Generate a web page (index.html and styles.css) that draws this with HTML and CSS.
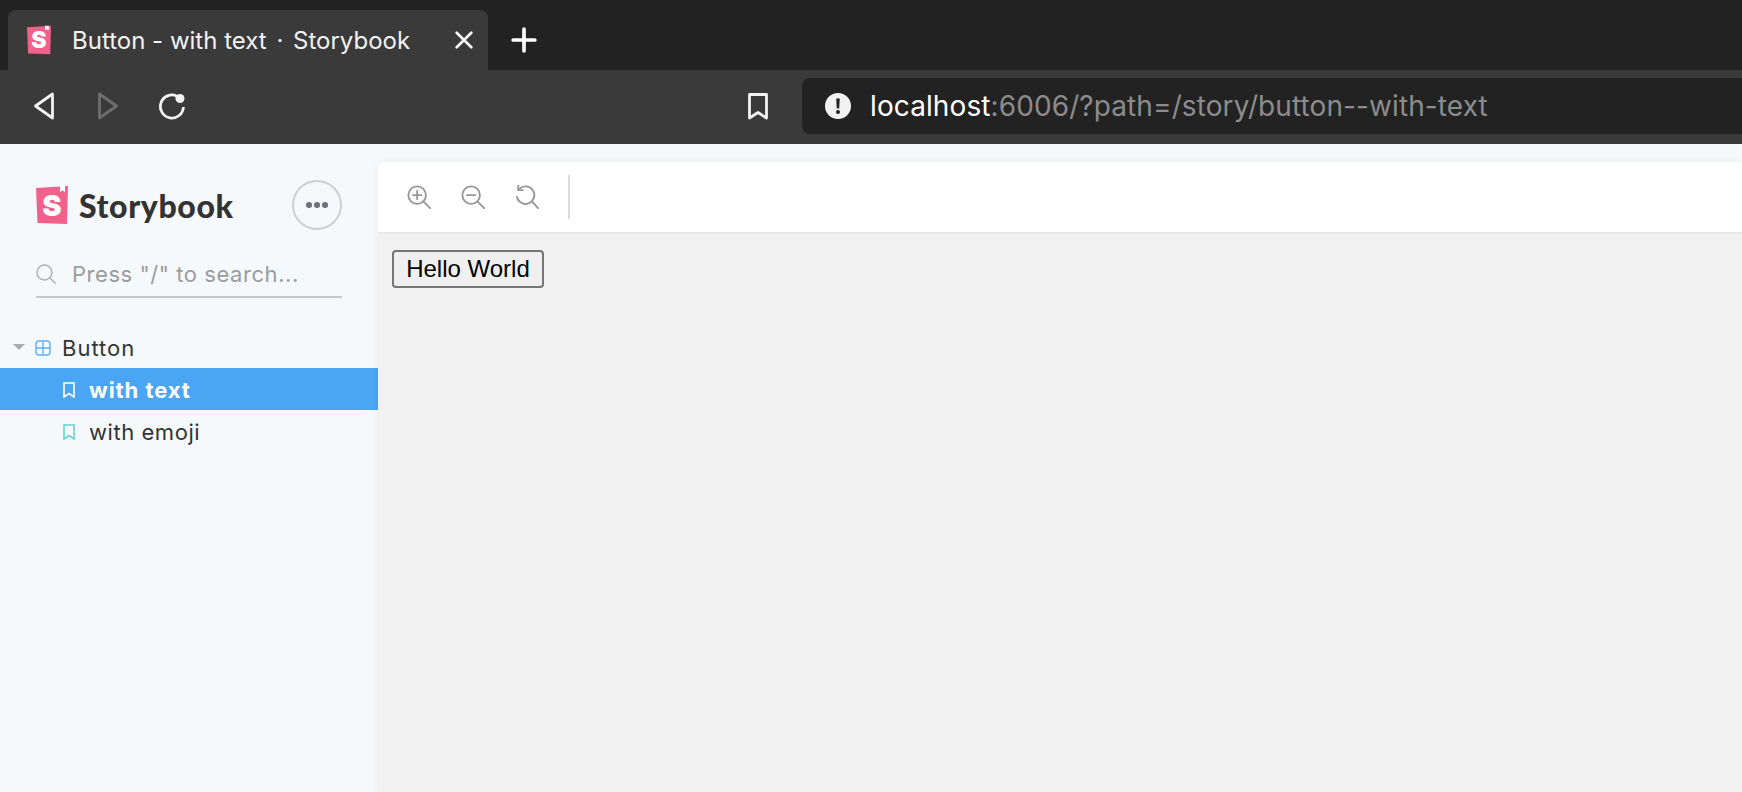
FILE: index.html
```html
<!DOCTYPE html>
<html lang="en">
<head>
<meta charset="utf-8">
<title>Button - with text · Storybook</title>
<link rel="stylesheet" href="styles.css">
</head>
<body>
<div class="tabstrip">
  <div class="tab">
    <span class="logo logo-small"><svg class="logo-bg" viewBox="0 0 32 38"><path d="M0 2 L32 0 L31 38 L1.5 37 Z" fill="#f1618c"/><path d="M24 0 L24 6 L26.5 4.5 L29 6 L29 0 Z" fill="#fff"/></svg><span class="logo-s">S</span></span>
    <span class="tab-title">Button - with text <span class="sep">·</span> Storybook</span>
    <svg class="tab-close" viewBox="0 0 16 16"><path d="M1.5 1.5 L14.5 14.5 M14.5 1.5 L1.5 14.5" stroke="#f2f2f2" stroke-width="2.4" stroke-linecap="round"/></svg>
  </div>
  <svg class="new-tab" viewBox="0 0 24 24"><path d="M12 2 V22 M2 12 H22" stroke="#fff" stroke-width="3.4" stroke-linecap="round"/></svg>
</div>
<div class="toolbar">
  <div class="nav">
    <svg class="nav-icon" viewBox="0 0 20 28"><path d="M18.5 2 V26 L1.5 14 Z" fill="none" stroke="#f2f2f2" stroke-width="2.8" stroke-linejoin="round"/></svg>
    <svg class="nav-icon" viewBox="0 0 20 28"><path d="M1.5 2 V26 L18.5 14 Z" fill="none" stroke="#6e6e6e" stroke-width="2.8" stroke-linejoin="round"/></svg>
    <svg class="nav-icon nav-reload" viewBox="0 0 28 28"><path d="M19 4.2 A11.5 11.5 0 1 0 25.4 15" fill="none" stroke="#f2f2f2" stroke-width="2.8"/><circle cx="22" cy="6.5" r="4.5" fill="#f2f2f2"/></svg>
  </div>
  <svg class="bookmark" viewBox="0 0 20 27"><path d="M1.5 1.5 H18.5 V25 L10 19.5 L1.5 25 Z" fill="none" stroke="#f2f2f2" stroke-width="2.8" stroke-linejoin="round"/></svg>
  <div class="address">
    <svg class="alert" viewBox="0 0 26 26"><circle cx="13" cy="13" r="13" fill="#f2f2f2"/><path d="M11.2 5.5 H14.8 L14.2 15.5 H11.8 Z" fill="#222"/><circle cx="13" cy="19" r="2" fill="#222"/></svg>
    <span class="url"><span class="host">localhost</span>:6006/?path=/story/button--with-text</span>
  </div>
</div>
<div class="app">
  <aside class="sidebar">
    <div class="brand">
      <span class="logo logo-large"><svg class="logo-bg" viewBox="0 0 32 38"><path d="M0 2 L32 0 L31 38 L1.5 37 Z" fill="#f1618c"/><path d="M24 0 L24 6 L26.5 4.5 L29 6 L29 0 Z" fill="#fff"/></svg><span class="logo-s">S</span></span>
      <span class="wordmark">Storybook</span>
      <span class="menu-btn"><i></i><i></i><i></i></span>
    </div>
    <div class="search">
      <svg class="search-icon" viewBox="0 0 20 20"><circle cx="8.5" cy="8.5" r="7.5" fill="none" stroke="#aeb1b4" stroke-width="1.5"/><path d="M14 14 L19.5 19.5" stroke="#aeb1b4" stroke-width="1.5" stroke-linecap="round"/></svg>
      <span class="search-text">Press "/" to search...</span>
    </div>
    <nav class="tree">
      <div class="row row-component">
        <span class="caret"></span>
        <svg class="component-icon" viewBox="0 0 16 16"><rect x="1" y="1" width="14" height="14" rx="3" fill="none" stroke="#5fb0f7" stroke-width="1.4"/><path d="M8 1 V15 M1 8 H15" stroke="#5fb0f7" stroke-width="1.4"/></svg>
        <span>Button</span>
      </div>
      <div class="row row-story row-active">
        <svg class="story-icon" viewBox="0 0 12 16"><path d="M1 1 H11 V15 L6 11.5 L1 15 Z" fill="none" stroke="#fff" stroke-width="1.6"/></svg>
        <span>with text</span>
      </div>
      <div class="row row-story">
        <svg class="story-icon" viewBox="0 0 12 16"><path d="M1 1 H11 V15 L6 11.5 L1 15 Z" fill="none" stroke="#63d4d0" stroke-width="1.6"/></svg>
        <span>with emoji</span>
      </div>
    </nav>
  </aside>
  <main class="preview">
    <div class="preview-bar">
      <svg class="zoom-icon" viewBox="0 0 26 26"><circle cx="11" cy="11" r="9.5" fill="none" stroke="#979797" stroke-width="2"/><path d="M18 18 L25 25 M11 6.5 V15.5 M6.5 11 H15.5" stroke="#979797" stroke-width="2" stroke-linecap="round"/></svg>
      <svg class="zoom-icon" viewBox="0 0 26 26"><circle cx="11" cy="11" r="9.5" fill="none" stroke="#979797" stroke-width="2"/><path d="M18 18 L25 25 M6.5 11 H15.5" stroke="#979797" stroke-width="2" stroke-linecap="round"/></svg>
      <svg class="zoom-icon" viewBox="0 0 26 26"><path d="M4.5 4.5 A9.5 9.5 0 1 1 2 12" fill="none" stroke="#979797" stroke-width="2"/><path d="M18.5 18 L25 25 M3.5 0.5 V5.5 H8.5" fill="none" stroke="#979797" stroke-width="2" stroke-linecap="round"/></svg>
      <span class="bar-divider"></span>
    </div>
    <div class="canvas">
      <button class="hello" type="button">Hello World</button>
    </div>
  </main>
</div>
</body>
</html>
```

FILE: styles.css
```css
* { box-sizing: border-box; }
html, body { margin: 0; height: 100%; overflow: hidden; }
body { width: 1742px; height: 792px; display: flex; flex-direction: column; font-family: Inter, "Liberation Sans", sans-serif; background: #f6f9fc; }

.tabstrip { height: 70px; flex: none; background: #222; padding: 10px 0 0 8px; display: flex; align-items: flex-start; }
.tab { width: 480px; height: 60px; background: #3a3a3a; border-radius: 8px 8px 0 0; display: flex; align-items: center; padding: 0 0 0 19px; }
.tab-title { margin-left: 21px; color: #f2f2f2; font-size: 24px; white-space: nowrap; width: 354px; }
.sep { margin: 0 3px; }
.tab-close { width: 18px; height: 18px; margin-left: 29px; flex: none; }
.new-tab { width: 26px; height: 26px; margin: 17px 0 0 23px; flex: none; }

.logo { display: block; position: relative; flex: none; }
.logo-bg { display: block; width: 100%; height: 100%; }
.logo-s { position: absolute; inset: 0; display: flex; align-items: center; justify-content: center; color: #fff; font-family: Inter, sans-serif; font-weight: 900; }
.logo-small { width: 24px; height: 30px; }
.logo-small .logo-s { font-size: 23px; }
.logo-large { width: 32px; height: 38px; }
.logo-large .logo-s { font-size: 29px; }

.toolbar { height: 74px; flex: none; background: #3a3a3a; display: flex; align-items: center; padding-bottom: 2px; }
.nav { width: 740px; display: flex; align-items: center; padding-left: 34px; flex: none; }
.nav-icon { width: 20px; height: 28px; margin-right: 44px; flex: none; }
.nav-reload { width: 28px; margin: 0 0 0 -4px; }
.bookmark { width: 20px; height: 27px; margin-left: 8px; flex: none; }
.address { margin-left: 34px; flex: 1; height: 56px; background: #222; border-radius: 8px 0 0 8px; display: flex; align-items: center; padding-left: 23px; }
.alert { width: 26px; height: 26px; flex: none; }
.url { margin-left: 19px; color: #8c8c8c; font-size: 28px; white-space: nowrap; letter-spacing: 0.1px; }
.host { color: #fff; }

.app { flex: 1; display: flex; min-height: 0; }
.sidebar { width: 378px; flex: none; background: #f6f9fc; padding-top: 36px; color: #333; }
.brand { display: flex; align-items: center; height: 50px; padding: 0 36px; }
.wordmark { margin-left: 11px; font-family: Lato, sans-serif; font-weight: 900; font-size: 32px; letter-spacing: 0.6px; color: #333; }
.menu-btn { margin-left: auto; width: 50px; height: 50px; border: 2px solid #ccd0d3; border-radius: 50%; display: flex; align-items: center; justify-content: center; gap: 2.5px; }
.menu-btn i { width: 5.5px; height: 5.5px; border-radius: 50%; background: #6f7377; }
.search { margin: 24px 36px 0; height: 44px; border-bottom: 2px solid #c6c8cc; display: flex; align-items: center; padding-bottom: 2px; }
.search-icon { width: 20px; height: 20px; flex: none; }
.search-text { margin-left: 16px; font-size: 22px; color: #9a9c9e; white-space: nowrap; letter-spacing: 0.55px; }

.tree { margin-top: 28px; font-size: 22px; }
.row { height: 42px; padding-top: 2px; display: flex; align-items: center; white-space: nowrap; letter-spacing: 0.55px; }
.row-component { padding-left: 13px; letter-spacing: 1px; }
.caret { width: 0; height: 0; border-left: 6px solid transparent; border-right: 6px solid transparent; border-top: 6px solid #aaa; margin-top: -3px; }
.component-icon { width: 16px; height: 16px; margin-left: 10px; margin-right: 11px; flex: none; }
.row-story { padding-left: 63px; }
.story-icon { width: 12px; height: 16px; margin-right: 14px; flex: none; }
.row-active { background: #4aa5f5; color: #fff; font-weight: 700; letter-spacing: 0.95px; }

.preview { flex: 1; margin-top: 18px; min-width: 0; display: flex; flex-direction: column; box-shadow: 0 0 6px rgba(0,0,0,0.06); border-radius: 6px 0 0 0; overflow: hidden; }
.preview-bar { height: 72px; flex: none; background: #fff; border-bottom: 2px solid #e8e8e8; display: flex; align-items: center; padding-left: 29px; }
.zoom-icon { width: 24px; height: 24px; margin-right: 30px; flex: none; }
.bar-divider { width: 1.5px; height: 44px; background: #dcdcdc; margin-left: -1px; }
.canvas { flex: 1; background: #f1f1f1; padding: 16px 14px; }
.hello { display: block; width: 152px; height: 38px; padding: 0; font-family: "Liberation Sans", Arial, sans-serif; font-size: 24px; color: #000; background: #efefef; border: 2px solid #767676; border-radius: 4px; }
```
